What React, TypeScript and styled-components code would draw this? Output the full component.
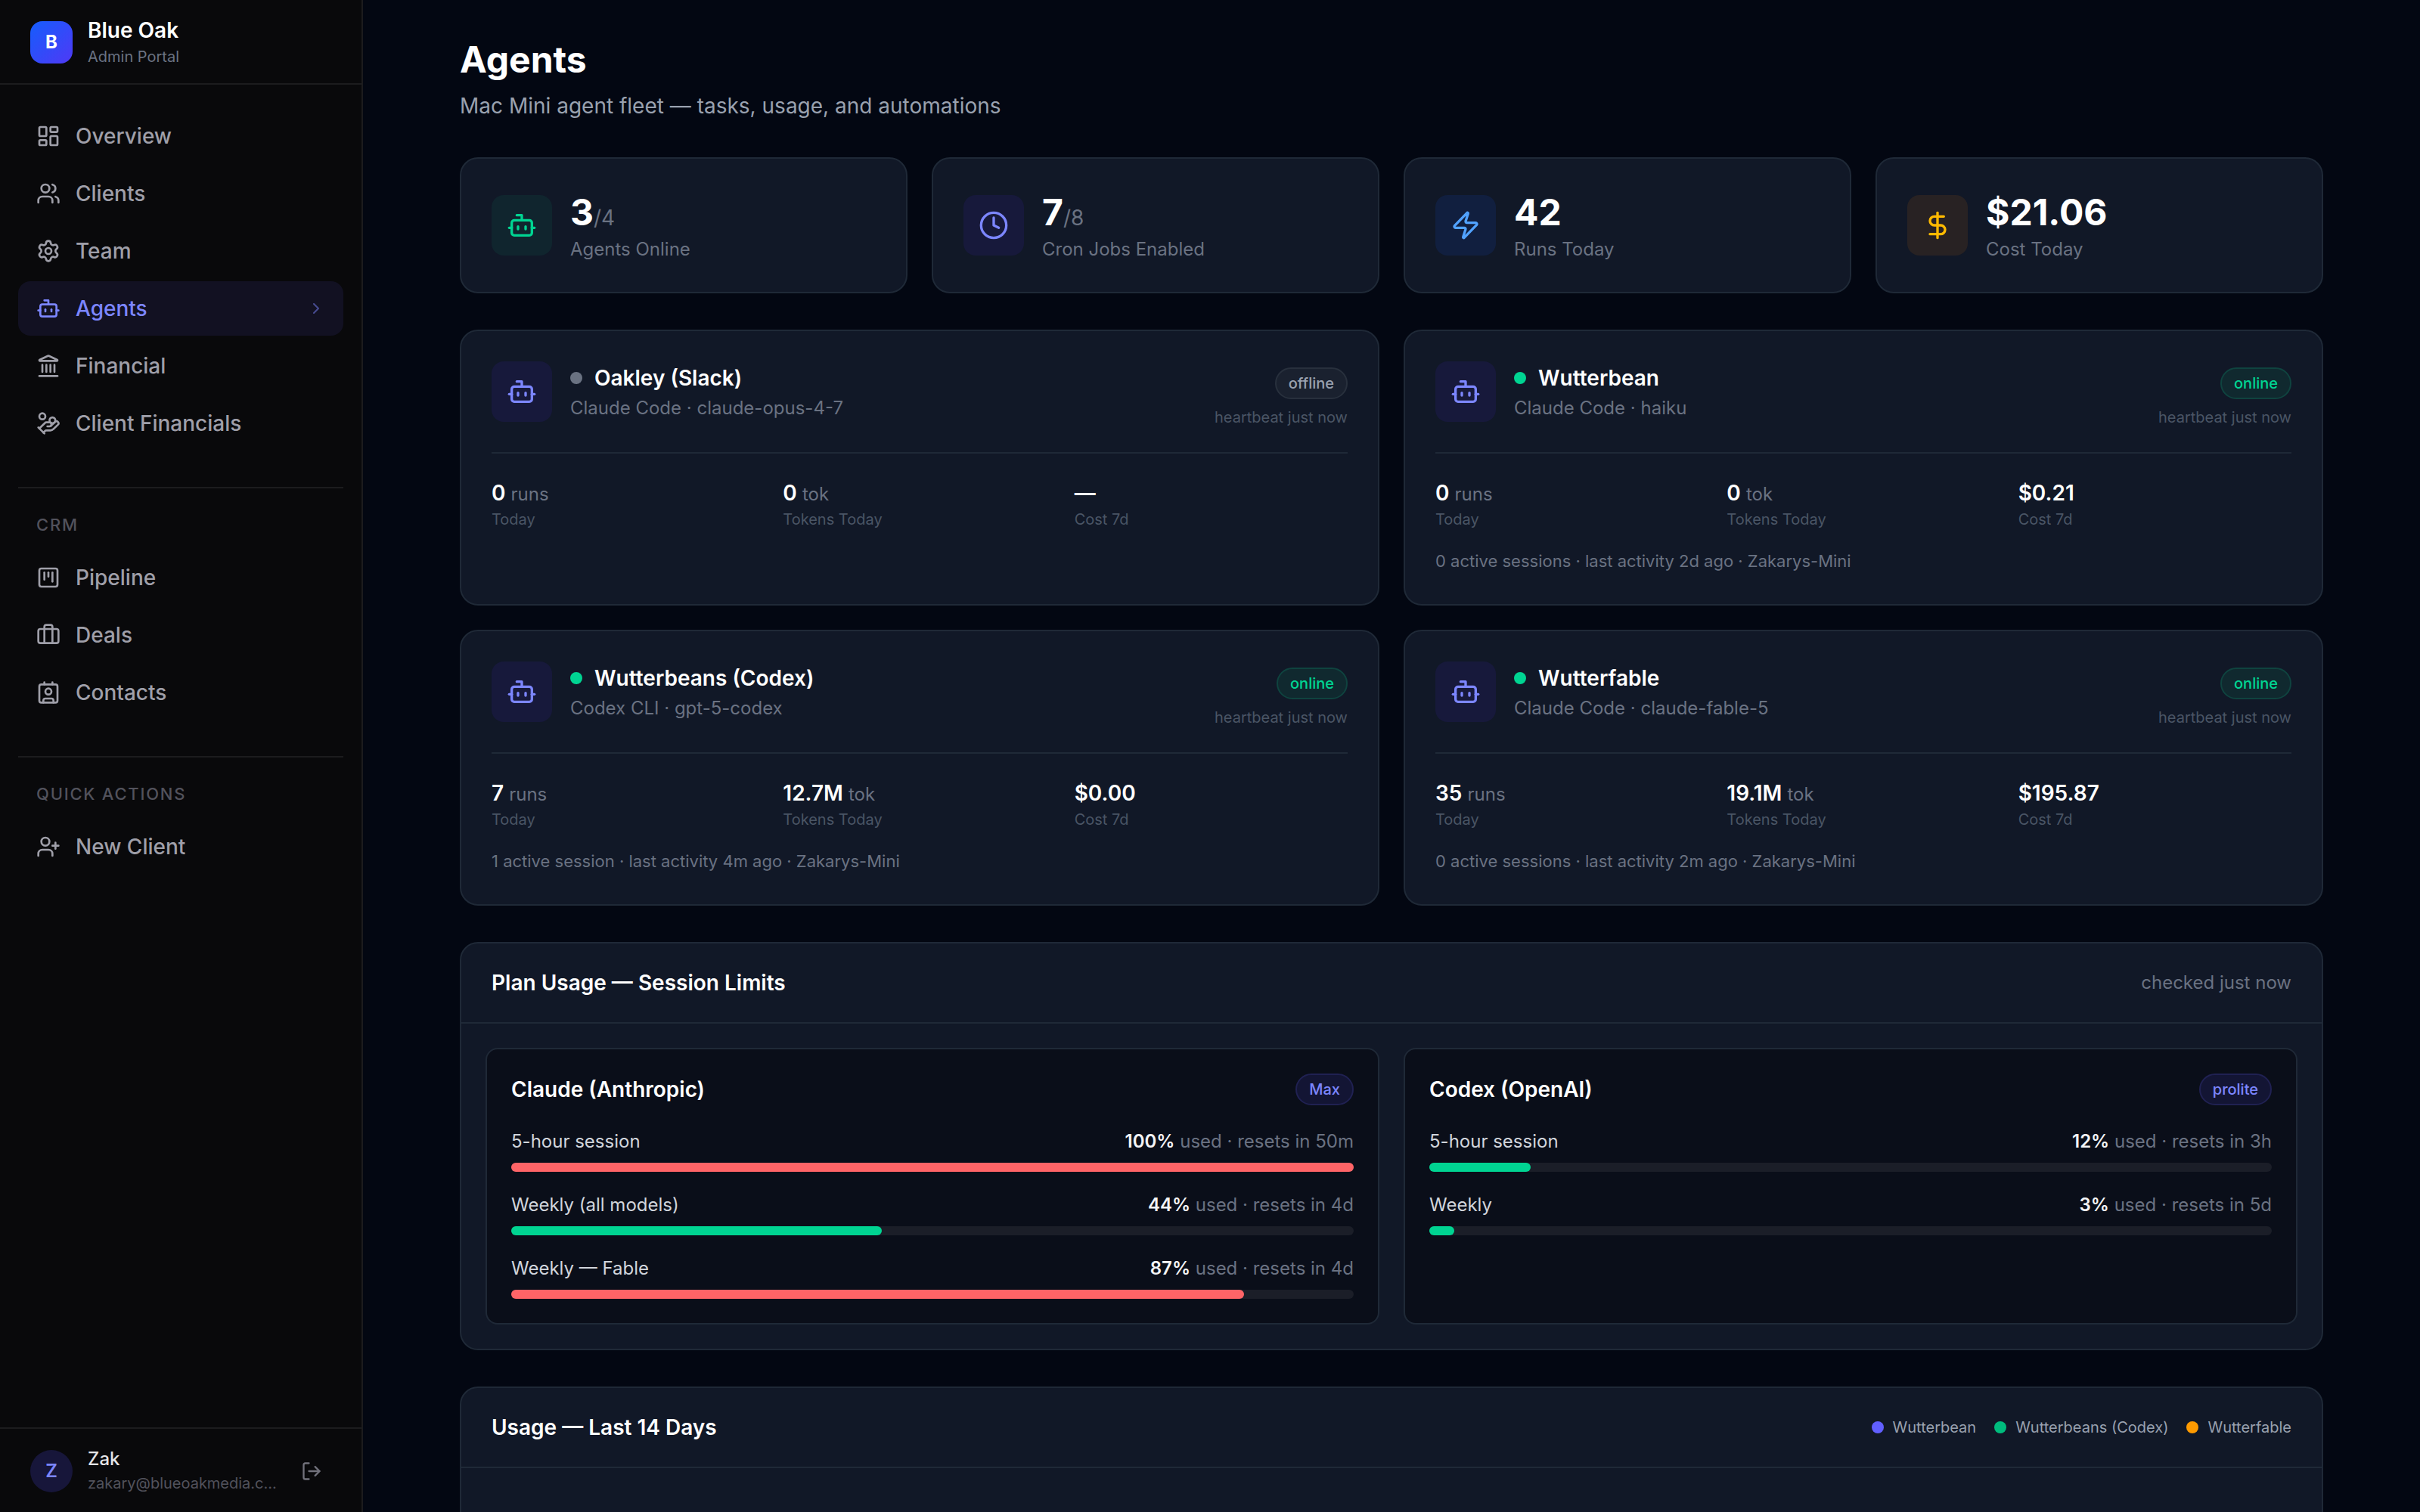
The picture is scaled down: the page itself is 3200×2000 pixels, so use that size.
import React from 'react';
import styled, { createGlobalStyle } from 'styled-components';
import {
  Bot,
  Briefcase,
  ChevronRight,
  Clock,
  Contact,
  DollarSign,
  HandCoins,
  Landmark,
  LayoutDashboard,
  LogOut,
  Settings,
  SquareKanban,
  UserPlus,
  Users,
  Zap,
  type LucideIcon,
} from 'lucide-react';

/* ---------- theme values ---------- */

const color = {
  page: '#030712',
  sidebar: '#09090b',
  sidebarLine: '#1c1c1e',
  card: '#111827',
  inset: '#0a0e19',
  line: '#1f2937',
  track: '#1b1e28',
  white: '#ffffff',
  soft: '#d1d5dc',
  muted: '#99a1af',
  dim: '#6a7282',
  faint: '#4a5565',
  indigo: '#7c86ff',
  green: '#00d492',
  red: '#ff6467',
  blue: '#51a2ff',
  amber: '#ffba00',
};

const GlobalStyle = createGlobalStyle`
  *, *::before, *::after { box-sizing: border-box; }
  body {
    margin: 0;
    background: ${color.page};
    color: ${color.white};
    font-family: Inter, "Liberation Sans", sans-serif;
    font-size: 28px;
    line-height: 40px;
    -webkit-font-smoothing: antialiased;
  }
  h1, h2, h3, p, dl, dd, ul { margin: 0; padding: 0; }
  ul { list-style: none; }
  a { color: inherit; text-decoration: none; }
  small { line-height: 1; }
  svg { display: block; flex-shrink: 0; }
`;

/* ---------- shell ---------- */

const Shell = styled.div`
  display: flex;
  height: 100vh;
  overflow: hidden;
`;

const Sidebar = styled.aside`
  display: flex;
  flex-direction: column;
  flex: 0 0 480px;
  min-width: 0;
  background: ${color.sidebar};
  border-right: 2px solid ${color.sidebarLine};
`;

const Brand = styled.header`
  display: flex;
  align-items: center;
  gap: 20px;
  height: 112px;
  padding: 2px 40px 0;
  border-bottom: 2px solid ${color.sidebarLine};
`;

const BrandMark = styled.div`
  display: grid;
  place-items: center;
  width: 56px;
  height: 56px;
  border-radius: 16px;
  background: linear-gradient(135deg, #155dfc, #4f39f6);
  font-size: 24px;
  font-weight: 700;
`;

const BrandName = styled.p`
  font-size: 28px;
  line-height: 38px;
  font-weight: 600;
`;

const BrandSub = styled.p`
  font-size: 20px;
  line-height: 32px;
  color: ${color.dim};
`;

const Nav = styled.nav`
  flex: 1;
  padding: 32px 24px;
  overflow: hidden;
`;

const NavList = styled.ul`
  display: flex;
  flex-direction: column;
  gap: 4px;
`;

const NavLink = styled.a<{ $active?: boolean }>`
  display: flex;
  align-items: center;
  gap: 20px;
  height: 72px;
  padding: 0 24px;
  border-radius: 16px;
  font-weight: 500;
  color: ${p => (p.$active ? color.indigo : '#9f9fa9')};
  background: ${p => (p.$active ? '#121122' : 'transparent')};

  span { flex: 1; }
`;

const NavSection = styled.section`
  margin-top: 48px;
  padding-top: 32px;
  border-top: 2px solid ${color.sidebarLine};
`;

const NavHeading = styled.h2`
  padding: 0 24px;
  margin-bottom: 18px;
  font-size: 22px;
  line-height: 32px;
  font-weight: 500;
  letter-spacing: 0.08em;
  text-transform: uppercase;
  color: #52525c;
`;

const Account = styled.footer`
  display: flex;
  align-items: center;
  gap: 20px;
  height: 112px;
  padding: 2px 40px 0;
  border-top: 2px solid ${color.sidebarLine};
`;

const Avatar = styled.div`
  display: grid;
  place-items: center;
  flex-shrink: 0;
  width: 56px;
  height: 56px;
  border-radius: 50%;
  background: #17163a;
  color: ${color.indigo};
  font-size: 24px;
  font-weight: 600;
`;

const AccountText = styled.div`
  flex: 1;
  min-width: 0;
`;

const AccountName = styled.p`
  font-size: 24px;
  line-height: 32px;
  font-weight: 500;
  color: #e4e4e7;
`;

const AccountMail = styled.p`
  overflow: hidden;
  text-overflow: ellipsis;
  white-space: nowrap;
  font-size: 20px;
  line-height: 32px;
  color: #52525c;
`;

const IconButton = styled.button`
  padding: 12px;
  border: 0;
  background: none;
  color: #71717b;
  cursor: pointer;
`;

/* ---------- main column ---------- */

const Main = styled.main`
  flex: 1;
  min-width: 0;
  overflow-y: auto;
  scrollbar-width: none;
`;

const Content = styled.div`
  display: flex;
  flex-direction: column;
  gap: 48px;
  max-width: 2560px;
  margin: 0 auto;
  padding: 48px;
`;

const PageTitle = styled.h1`
  font-size: 48px;
  line-height: 62px;
  font-weight: 700;
`;

const PageSub = styled.p`
  margin-top: 10px;
  color: ${color.muted};
`;

const Grid = styled.div<{ $cols: number }>`
  display: grid;
  grid-template-columns: repeat(${p => p.$cols}, minmax(0, 1fr));
  gap: 32px;
`;

const Card = styled.article`
  padding: 40px;
  border: 2px solid ${color.line};
  border-radius: 24px;
  background: ${color.card};
`;

const StatCard = styled(Card)`
  display: flex;
  align-items: center;
  gap: 24px;
`;

const Tile = styled.div<{ $fg: string; $bg: string }>`
  display: grid;
  place-items: center;
  flex-shrink: 0;
  width: 80px;
  height: 80px;
  border-radius: 16px;
  color: ${p => p.$fg};
  background: ${p => p.$bg};
`;

const StatValue = styled.p`
  font-size: 48px;
  line-height: 62px;
  font-weight: 700;

  small {
    font-size: 28px;
    font-weight: 400;
    color: ${color.dim};
  }
`;

const StatLabel = styled.p`
  margin-top: 2px;
  font-size: 24px;
  line-height: 32px;
  color: ${color.dim};
`;

/* ---------- agent cards ---------- */

const AgentHead = styled.header`
  display: flex;
  align-items: flex-start;
  gap: 24px;
  padding-bottom: 30px;
  border-bottom: 2px solid ${color.line};
`;

const AgentTitle = styled.div`
  flex: 1;
  min-width: 0;
`;

const AgentName = styled.h2`
  display: flex;
  align-items: center;
  gap: 16px;
  font-size: 28px;
  line-height: 44px;
  font-weight: 600;
`;

const Dot = styled.span<{ $color: string }>`
  width: 16px;
  height: 16px;
  border-radius: 50%;
  background: ${p => p.$color};
`;

const AgentModel = styled.p`
  margin-top: 2px;
  font-size: 24px;
  line-height: 32px;
  color: ${color.dim};
`;

const AgentStatus = styled.div`
  display: flex;
  flex-direction: column;
  align-items: flex-end;
  gap: 8px;
  padding-top: 8px;
`;

type Tone = 'online' | 'offline' | 'plan';

const tones: Record<Tone, { fg: string; bg: string; line: string }> = {
  online: { fg: color.green, bg: '#10292f', line: '#0f433f' },
  offline: { fg: color.muted, bg: '#1a212f', line: '#28303d' },
  plan: { fg: color.indigo, bg: '#131534', line: '#202152' },
};

const Badge = styled.span<{ $tone: Tone }>`
  padding: 4px 16px;
  border: 2px solid ${p => tones[p.$tone].line};
  border-radius: 21px;
  background: ${p => tones[p.$tone].bg};
  color: ${p => tones[p.$tone].fg};
  font-size: 20px;
  line-height: 30px;
  font-weight: 500;
`;

const Heartbeat = styled.p`
  font-size: 20px;
  line-height: 32px;
  color: ${color.faint};
`;

const Metrics = styled.dl`
  display: grid;
  grid-template-columns: repeat(3, minmax(0, 1fr));
  gap: 24px;
  padding-top: 32px;
`;

const Metric = styled.div`
  display: flex;
  flex-direction: column-reverse;

  dt {
    font-size: 20px;
    line-height: 30px;
    color: ${color.faint};
  }
  dd {
    font-weight: 600;
  }
  small {
    font-size: 24px;
    font-weight: 400;
    color: ${color.dim};
  }
`;

const AgentNote = styled.p`
  margin-top: 24px;
  font-size: 22px;
  line-height: 33px;
  color: ${color.dim};
`;

/* ---------- panels ---------- */

const Panel = styled.section`
  border: 2px solid ${color.line};
  border-radius: 24px;
  background: ${color.card};
`;

const PanelHead = styled.header`
  display: flex;
  align-items: center;
  justify-content: space-between;
  padding: 32px 40px;
  border-bottom: 2px solid ${color.line};
`;

const PanelTitle = styled.h2`
  font-size: 28px;
  line-height: 40px;
  font-weight: 600;
`;

const PanelNote = styled.p`
  font-size: 24px;
  line-height: 32px;
  color: ${color.dim};
`;

const PanelBody = styled.div`
  padding: 32px;
`;

const ChartArea = styled.div`
  min-height: 480px;
`;

const PlanCard = styled.article`
  display: flex;
  flex-direction: column;
  gap: 28px;
  padding: 32px;
  border: 2px solid ${color.line};
  border-radius: 16px;
  background: ${color.inset};
`;

const PlanHead = styled.header`
  display: flex;
  align-items: center;
  justify-content: space-between;
  margin-bottom: 4px;

  h3 {
    font-size: 28px;
    line-height: 42px;
    font-weight: 600;
  }
`;

const LimitText = styled.div`
  display: flex;
  justify-content: space-between;
  margin-bottom: 12px;
  font-size: 24px;
  line-height: 32px;
  color: ${color.soft};
`;

const LimitUsage = styled.span`
  color: ${color.dim};

  strong {
    font-weight: 600;
    color: #f3f4f6;
  }
`;

const Track = styled.div`
  height: 12px;
  border-radius: 6px;
  background: ${color.track};
`;

const Fill = styled.div<{ $color: string }>`
  height: 100%;
  border-radius: 6px;
  background: ${p => p.$color};
`;

const Legend = styled.ul`
  display: flex;
  gap: 24px;

  li {
    display: flex;
    align-items: center;
    gap: 12px;
    font-size: 20px;
    line-height: 30px;
    color: ${color.muted};
  }
`;

/* ---------- data ---------- */

type NavEntry = { label: string; icon: LucideIcon; active?: boolean };

const mainNav: NavEntry[] = [
  { label: 'Overview', icon: LayoutDashboard },
  { label: 'Clients', icon: Users },
  { label: 'Team', icon: Settings },
  { label: 'Agents', icon: Bot, active: true },
  { label: 'Financial', icon: Landmark },
  { label: 'Client Financials', icon: HandCoins },
];

const crmNav: NavEntry[] = [
  { label: 'Pipeline', icon: SquareKanban },
  { label: 'Deals', icon: Briefcase },
  { label: 'Contacts', icon: Contact },
];

const quickNav: NavEntry[] = [{ label: 'New Client', icon: UserPlus }];

const stats = [
  { value: '3', of: '/4', label: 'Agents Online', icon: Bot, fg: color.green, bg: '#10252e' },
  { value: '7', of: '/8', label: 'Cron Jobs Enabled', icon: Clock, fg: color.indigo, bg: '#17193b' },
  { value: '42', label: 'Runs Today', icon: Zap, fg: color.blue, bg: '#111f3f' },
  { value: '$21.06', label: 'Cost Today', icon: DollarSign, fg: color.amber, bg: '#282223' },
];

const agents = [
  {
    name: 'Oakley (Slack)',
    model: 'Claude Code · claude-opus-4-7',
    status: 'offline' as const,
    runs: '0',
    tokens: '0',
    cost: '—',
  },
  {
    name: 'Wutterbean',
    model: 'Claude Code · haiku',
    status: 'online' as const,
    runs: '0',
    tokens: '0',
    cost: '$0.21',
    note: '0 active sessions · last activity 2d ago · Zakarys-Mini',
  },
  {
    name: 'Wutterbeans (Codex)',
    model: 'Codex CLI · gpt-5-codex',
    status: 'online' as const,
    runs: '7',
    tokens: '12.7M',
    cost: '$0.00',
    note: '1 active session · last activity 4m ago · Zakarys-Mini',
  },
  {
    name: 'Wutterfable',
    model: 'Claude Code · claude-fable-5',
    status: 'online' as const,
    runs: '35',
    tokens: '19.1M',
    cost: '$195.87',
    note: '0 active sessions · last activity 2m ago · Zakarys-Mini',
  },
];

const plans = [
  {
    name: 'Claude (Anthropic)',
    plan: 'Max',
    limits: [
      { label: '5-hour session', used: 100, resets: '50m' },
      { label: 'Weekly (all models)', used: 44, resets: '4d' },
      { label: 'Weekly — Fable', used: 87, resets: '4d' },
    ],
  },
  {
    name: 'Codex (OpenAI)',
    plan: 'prolite',
    limits: [
      { label: '5-hour session', used: 12, resets: '3h' },
      { label: 'Weekly', used: 3, resets: '5d' },
    ],
  },
];

const legend = [
  { label: 'Wutterbean', color: '#615fff' },
  { label: 'Wutterbeans (Codex)', color: '#00bc7d' },
  { label: 'Wutterfable', color: '#fe9a00' },
];

/* ---------- components ---------- */

function NavItems({ items }: { items: NavEntry[] }) {
  return (
    <NavList>
      {items.map(({ label, icon: Icon, active }) => (
        <li key={label}>
          <NavLink href="#" $active={active} aria-current={active ? 'page' : undefined}>
            <Icon size={32} />
            <span>{label}</span>
            {active && <ChevronRight size={24} opacity={0.5} />}
          </NavLink>
        </li>
      ))}
    </NavList>
  );
}

function AgentCard({ agent }: { agent: (typeof agents)[number] }) {
  return (
    <Card>
      <AgentHead>
        <Tile $fg={color.indigo} $bg="#17193b">
          <Bot size={40} />
        </Tile>
        <AgentTitle>
          <AgentName>
            <Dot $color={agent.status === 'online' ? color.green : color.dim} />
            {agent.name}
          </AgentName>
          <AgentModel>{agent.model}</AgentModel>
        </AgentTitle>
        <AgentStatus>
          <Badge $tone={agent.status}>{agent.status}</Badge>
          <Heartbeat>heartbeat just now</Heartbeat>
        </AgentStatus>
      </AgentHead>
      <Metrics>
        <Metric>
          <dt>Today</dt>
          <dd>
            {agent.runs} <small>runs</small>
          </dd>
        </Metric>
        <Metric>
          <dt>Tokens Today</dt>
          <dd>
            {agent.tokens} <small>tok</small>
          </dd>
        </Metric>
        <Metric>
          <dt>Cost 7d</dt>
          <dd>{agent.cost}</dd>
        </Metric>
      </Metrics>
      {agent.note && <AgentNote>{agent.note}</AgentNote>}
    </Card>
  );
}

function Limit({ label, used, resets }: { label: string; used: number; resets: string }) {
  return (
    <div>
      <LimitText>
        <span>{label}</span>
        <LimitUsage>
          <strong>{used}%</strong> used · resets in {resets}
        </LimitUsage>
      </LimitText>
      <Track role="progressbar" aria-label={label} aria-valuenow={used} aria-valuemin={0} aria-valuemax={100}>
        <Fill $color={used >= 80 ? color.red : color.green} style={{ width: `${used}%` }} />
      </Track>
    </div>
  );
}

export default function App() {
  return (
    <>
      <GlobalStyle />
      <Shell>
        <Sidebar>
          <Brand>
            <BrandMark>B</BrandMark>
            <div>
              <BrandName>Blue Oak</BrandName>
              <BrandSub>Admin Portal</BrandSub>
            </div>
          </Brand>
          <Nav>
            <NavItems items={mainNav} />
            <NavSection>
              <NavHeading>CRM</NavHeading>
              <NavItems items={crmNav} />
            </NavSection>
            <NavSection>
              <NavHeading>Quick Actions</NavHeading>
              <NavItems items={quickNav} />
            </NavSection>
          </Nav>
          <Account>
            <Avatar>Z</Avatar>
            <AccountText>
              <AccountName>Zak</AccountName>
              <AccountMail>zakary@blueoakmedia.com</AccountMail>
            </AccountText>
            <IconButton type="button" aria-label="Sign out">
              <LogOut size={28} />
            </IconButton>
          </Account>
        </Sidebar>

        <Main>
          <Content>
            <header>
              <PageTitle>Agents</PageTitle>
              <PageSub>Mac Mini agent fleet — tasks, usage, and automations</PageSub>
            </header>

            <Grid $cols={4}>
              {stats.map(({ value, of, label, icon: Icon, fg, bg }) => (
                <StatCard key={label}>
                  <Tile $fg={fg} $bg={bg}>
                    <Icon size={40} />
                  </Tile>
                  <div>
                    <StatValue>
                      {value}
                      {of && <small>{of}</small>}
                    </StatValue>
                    <StatLabel>{label}</StatLabel>
                  </div>
                </StatCard>
              ))}
            </Grid>

            <Grid $cols={2}>
              {agents.map(agent => (
                <AgentCard key={agent.name} agent={agent} />
              ))}
            </Grid>

            <Panel>
              <PanelHead>
                <PanelTitle>Plan Usage — Session Limits</PanelTitle>
                <PanelNote>checked just now</PanelNote>
              </PanelHead>
              <PanelBody>
                <Grid $cols={2}>
                  {plans.map(({ name, plan, limits }) => (
                    <PlanCard key={name}>
                      <PlanHead>
                        <h3>{name}</h3>
                        <Badge $tone="plan">{plan}</Badge>
                      </PlanHead>
                      {limits.map(limit => (
                        <Limit key={limit.label} {...limit} />
                      ))}
                    </PlanCard>
                  ))}
                </Grid>
              </PanelBody>
            </Panel>

            <Panel>
              <PanelHead>
                <PanelTitle>Usage — Last 14 Days</PanelTitle>
                <Legend>
                  {legend.map(item => (
                    <li key={item.label}>
                      <Dot $color={item.color} />
                      {item.label}
                    </li>
                  ))}
                </Legend>
              </PanelHead>
              <ChartArea />
            </Panel>
          </Content>
        </Main>
      </Shell>
    </>
  );
}
